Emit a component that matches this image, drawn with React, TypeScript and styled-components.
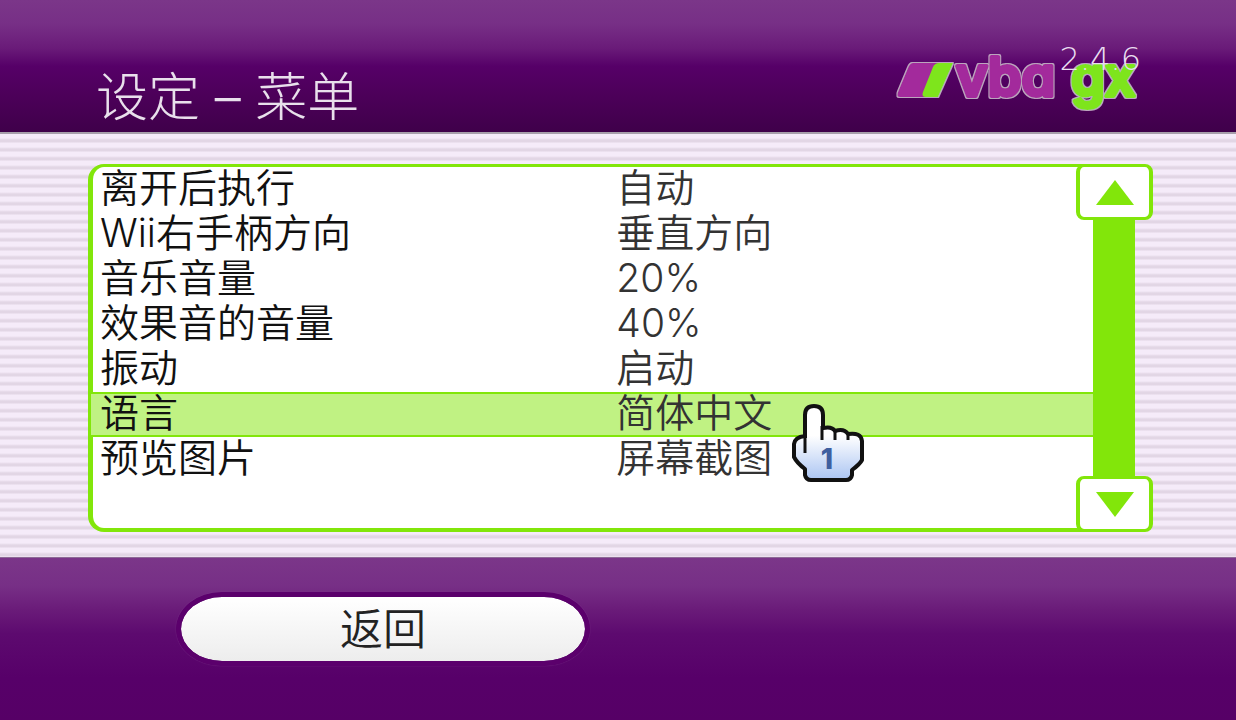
import React, { useState } from "react";
import styled, { createGlobalStyle } from "styled-components";

const GREEN = "#82e60a";

const GlobalStyle = createGlobalStyle`
  * { box-sizing: border-box; }
  body {
    margin: 0;
    background: #560067;
    font-family: Inter, "Noto Sans CJK SC", sans-serif;
    font-weight: 300;
  }
  button {
    font: inherit;
    color: inherit;
    margin: 0;
    padding: 0;
    border: 0;
    background: none;
    cursor: pointer;
  }
`;

const Page = styled.div`
  display: flex;
  flex-direction: column;
  min-height: 100vh;
`;

const Header = styled.header`
  display: flex;
  justify-content: space-between;
  align-items: flex-start;
  height: 132px;
  padding: 44px 92px 0 96px;
  background: linear-gradient(#7b3689 0, #772f86 24px, #6a1b79 48px, #560068 66px, #4c0059 96px, #3f004a 132px);
`;

const Title = styled.h1`
  margin: 0;
  padding-top: 18px;
  font-size: 52px;
  line-height: 72px;
  font-weight: 300;
  color: #e9e0ec;
`;

const Brand = styled.div`
  position: relative;
  width: 248px;
`;

const Logo = styled.svg`
  display: block;
  width: 248px;
  height: 70px;
  overflow: visible;
`;

const Version = styled.span`
  position: absolute;
  top: -1px;
  right: 3px;
  font-family: "DejaVu Sans Light", "DejaVu Sans", sans-serif;
  font-size: 32px;
  line-height: 32px;
  font-weight: 200;
  color: #e9def0;
`;

const Main = styled.main`
  display: flex;
  padding: 30px 83px 25px 88px;
  border-top: 2px solid #a79fab;
  background: repeating-linear-gradient(#f5ebf9 0, #f5ebf9 4px, #e2d6e5 6px, #e2d6e5 8px, #f5ebf9 9px);
`;

const Panel = styled.section`
  position: relative;
  flex: 1;
  min-height: 368px;
  border: solid ${GREEN};
  border-width: 3px 0 4px 5px;
  border-radius: 16px 0 0 16px;
  background: #fff;
`;

const OptionList = styled.ul`
  margin: 0;
  padding: 0;
  list-style: none;
`;

const OptionRow = styled.button<{ $active: boolean }>`
  display: grid;
  grid-template-columns: 52% 1fr;
  align-items: center;
  width: calc(100% + 2px);
  height: 45px;
  margin-left: -2px;
  padding: 0 0 4px 9px;
  text-align: left;
  font-size: 39px;
  font-weight: 350;
  line-height: 37px;
  color: #111;
  border: solid ${(p) => (p.$active ? GREEN : "transparent")};
  border-width: 2px 0;
  background: ${(p) => (p.$active ? "#c0f283" : "transparent")};
`;

const OptionValue = styled.span`
  color: #333;
`;

const ScrollBar = styled.div`
  position: relative;
  display: flex;
  flex-direction: column;
  width: 77px;
  margin-left: -17px;
`;

const Backing = styled.div`
  flex: 1;
  margin: 0 18px 0 17px;
  background: ${GREEN};
`;

const ScrollButton = styled.button`
  display: flex;
  align-items: center;
  justify-content: center;
  height: 56px;
  border: solid ${GREEN};
  border-width: 3px 4px;
  border-radius: 8px;
  background: #fff;
`;

const Pointer = styled.svg`
  position: absolute;
  left: 698px;
  top: 235px;
  width: 76px;
  height: 84px;
  pointer-events: none;
`;

const Footer = styled.footer`
  flex: 1;
  padding: 34px 176px 52px;
  border-top: 1px solid #8d6a96;
  background: linear-gradient(#7b3689 0, #772f86 28px, #6a1b79 52px, #5d0a6f 76px, #570069 120px, #560066 163px);
`;

const BackButton = styled.button`
  width: 414px;
  height: 74px;
  border: 5px solid #5b006c;
  border-radius: 46px / 37px;
  background: linear-gradient(#fff, #ededed) padding-box;
  box-shadow: 0 0 1px #8c4b98;
  font-size: 43px;
  font-weight: 350;
  line-height: 60px;
  color: #222;
`;

const options = [
  ["离开后执行", "自动"],
  ["Wii右手柄方向", "垂直方向"],
  ["音乐音量", "20%"],
  ["效果音的音量", "40%"],
  ["振动", "启动"],
  ["语言", "简体中文"],
  ["预览图片", "屏幕截图"],
];

const Word = styled.text`
  font-family: Inter, sans-serif;
  font-weight: 600;
  font-size: 54px;
  font-feature-settings: "cv11";
  paint-order: stroke;
  stroke-linejoin: round;
`;

function BrandLogo() {
  return (
    <Logo viewBox="0 0 248 70" role="img" aria-label="vba gx">
      <defs>
        <filter id="edge" x="-5%" y="-10%" width="110%" height="120%">
          <feMorphology in="SourceAlpha" operator="dilate" radius="1" result="grown" />
          <feFlood floodColor="#bba5bd" />
          <feComposite in2="grown" operator="in" result="rim" />
          <feMerge>
            <feMergeNode in="rim" />
            <feMergeNode in="SourceGraphic" />
          </feMerge>
        </filter>
      </defs>
      <g filter="url(#edge)">
        <path d="M17 19 H53 L37 53 H4 Q0 53 2 48 L12 24 Q14 19 17 19Z" fill="#a32a9c" />
        <path d="M43 19 H57 L42 53 H30 Q25 53 27 48 L37 23 Q39 19 43 19Z" fill="#7ee51c" />
      </g>
      <g filter="url(#edge)" strokeWidth="4">
        <Word x="60" y="52" fill="#a32a9c" stroke="#a32a9c">vba</Word>
        <Word x="175" y="52" fill="#7ee51c" stroke="#7ee51c">gx</Word>
      </g>
    </Logo>
  );
}

function HandPointer() {
  return (
    <Pointer viewBox="0 0 76 84" aria-hidden="true">
      <defs>
        <linearGradient id="palm" x1="0" y1="0" x2="0" y2="1">
          <stop offset="0.4" stopColor="#fff" />
          <stop offset="1" stopColor="#aac4f2" />
        </linearGradient>
      </defs>
      <path
        d="M14 36 V13 Q14 4 23 4 Q32 4 32 13 V26 Q41 24 44 29 Q53 26 57 32 Q70 30 71 39 V58 Q69 62 61 68 V73 Q60 78 55 78 H20 Q15 78 14 73 V67 Q6 61 3 55 V42 Q4 35 14 34"
        fill="url(#palm)"
        stroke="#111"
        strokeWidth="4"
        strokeLinejoin="round"
      />
      <path d="M14 32 V51 M31 24 V38 M44 29 V38 M57 32 V38" fill="none" stroke="#111" strokeWidth="3" />
      <text x="36" y="67" textAnchor="middle" fontFamily="Inter, sans-serif" fontWeight="800" fontSize="28" fill="#3f5f9f">1</text>
    </Pointer>
  );
}

export default function App() {
  const [selected, setSelected] = useState(5);
  return (
    <Page>
      <GlobalStyle />
      <Header>
        <Title>设定 – 菜单</Title>
        <Brand>
          <Version>2.4.6</Version>
          <BrandLogo />
        </Brand>
      </Header>
      <Main>
        <Panel>
          <OptionList>
            {options.map(([label, value], i) => (
              <li key={label}>
                <OptionRow type="button" $active={i === selected} onClick={() => setSelected(i)}>
                  <span>{label}</span>
                  <OptionValue>{value}</OptionValue>
                </OptionRow>
              </li>
            ))}
          </OptionList>
          <HandPointer />
        </Panel>
        <ScrollBar>
          <ScrollButton type="button" aria-label="向上">
            <svg width="38" height="25" viewBox="0 0 38 25"><path d="M19 0 38 25H0Z" fill={GREEN} /></svg>
          </ScrollButton>
          <Backing />
          <ScrollButton type="button" aria-label="向下">
            <svg width="38" height="25" viewBox="0 0 38 25"><path d="M0 0H38L19 25Z" fill={GREEN} /></svg>
          </ScrollButton>
        </ScrollBar>
      </Main>
      <Footer>
        <BackButton type="button">返回</BackButton>
      </Footer>
    </Page>
  );
}
